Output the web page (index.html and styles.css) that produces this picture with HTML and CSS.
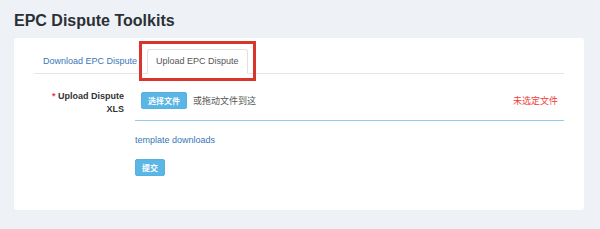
FILE: index.html
```html
<!DOCTYPE html>
<html lang="en">

<head>
    <meta charset="UTF-8">
    <meta name="viewport" content="width=device-width, initial-scale=1.0">
    <title>EPC Dispute Toolkits</title>
    <link rel="stylesheet" href="styles.css">
</head>

<body>
    <h1 class="page-title">EPC Dispute Toolkits</h1>

    <div class="panel">
        <!-- Tabs -->
        <ul class="tabs">
            <li><a href="#">Download EPC Dispute</a></li>
            <li class="active">
                <a href="#">Upload EPC Dispute</a>
                <span class="highlight"></span>
            </li>
        </ul>

        <form class="upload-form">
            <div class="form-row">
                <label class="form-label"><span class="req">*</span> Upload Dispute XLS</label>
                <div class="dropzone">
                    <button type="button" class="btn">选择文件</button>
                    <span class="hint">或拖动文件到这</span>
                    <span class="status">未选定文件</span>
                </div>
            </div>
            <div class="form-row">
                <div></div>
                <a href="#" class="template-link">template downloads</a>
            </div>
            <div class="form-row">
                <div></div>
                <div><button type="submit" class="btn">提交</button></div>
            </div>
        </form>
    </div>
</body>

</html>
```

FILE: styles.css
```css
body {
    margin: 0;
    padding: 0 16px 0 14px;
    background-color: #eef2f6;
    font-family: "Liberation Sans", Arial, "Noto Sans CJK SC", sans-serif;
    color: #333;
}

.page-title {
    margin: 0;
    padding-top: 11px;
    font-size: 16px;
    line-height: 20px;
    font-weight: bold;
    color: #2b3036;
}

.panel {
    margin-top: 7px;
    padding: 11px 20px 34px;
    background-color: white;
    border-radius: 3px;
}

.tabs {
    display: flex;
    margin: 0;
    padding: 0;
    list-style: none;
    border-bottom: 1px solid #e4e6e8;
}

.tabs li {
    position: relative;
    margin-right: 1px;
    margin-bottom: -1px;
}

.tabs a {
    display: block;
    padding: 0 8px;
    font-size: 9px;
    line-height: 23px;
    border: 1px solid transparent;
    border-radius: 3px 3px 0 0;
    color: #3a77b8;
    text-decoration: none;
}

.tabs .active a {
    color: #555;
    border-color: #dfe1e3;
    border-bottom-color: white;
    background-color: white;
}

/* red marker drawn over the active tab */
.highlight {
    position: absolute;
    top: -8px;
    left: -8px;
    right: -8px;
    bottom: -7px;
    border: 3px solid #d9352b;
}

.upload-form {
    margin-top: 14px;
}

.form-row {
    display: grid;
    grid-template-columns: 90px 1fr;
    column-gap: 11px;
    margin-bottom: 10px;
}

.form-row:last-child {
    margin-bottom: 0;
}

.form-label {
    padding-top: 2px;
    text-align: right;
    font-size: 9px;
    line-height: 13px;
    font-weight: bold;
    color: #333;
}

.req {
    color: #e03b3b;
}

.dropzone {
    display: flex;
    align-items: center;
    padding: 4px 6px 11px;
    border-bottom: 1px solid #8fcdee;
    margin-bottom: 3px;
}

.btn {
    height: 17px;
    padding: 0 6px;
    border: 1px solid #57b0de;
    border-radius: 2px;
    background-color: #5ab6e5;
    color: white;
    font-family: "Noto Sans CJK SC", sans-serif;
    font-size: 8px;
    font-weight: bold;
    line-height: 15px;
}

.hint {
    margin-left: 6px;
    font-family: "Noto Sans CJK SC", sans-serif;
    font-size: 9px;
    color: #555;
}

.status {
    margin-left: auto;
    font-family: "Noto Sans CJK SC", sans-serif;
    font-size: 9px;
    color: #ee4036;
}

.template-link {
    font-size: 9px;
    line-height: 13px;
    color: #3a77b8;
    text-decoration: none;
}
```
